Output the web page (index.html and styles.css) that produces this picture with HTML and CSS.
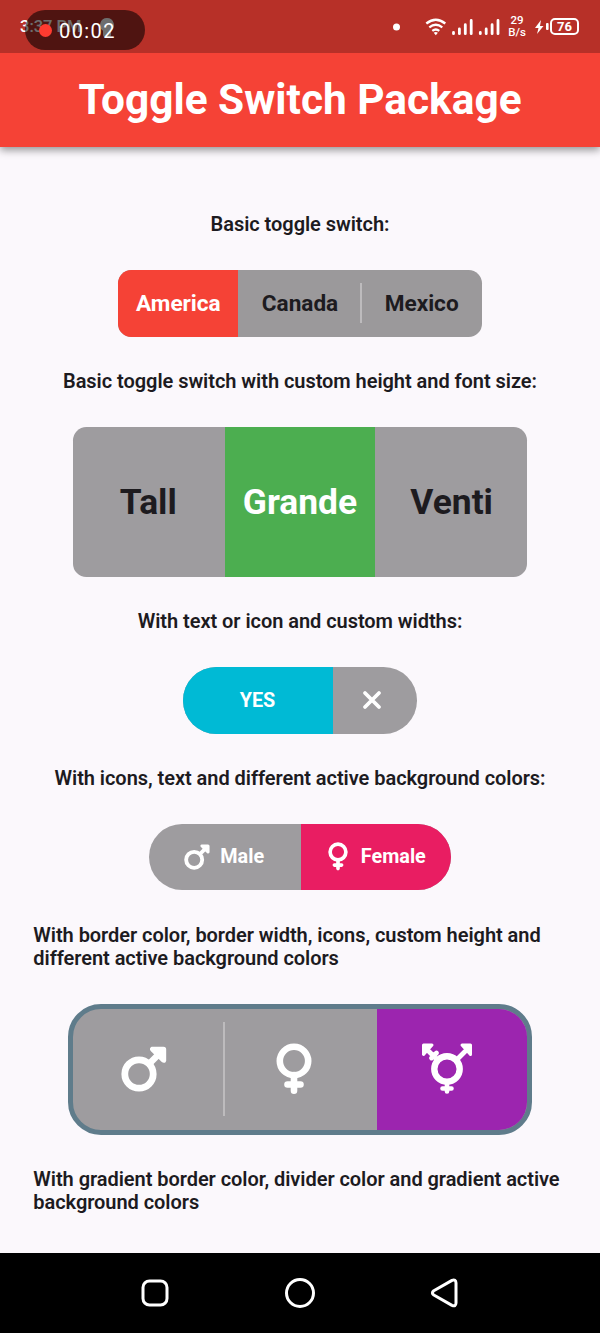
FILE: index.html
```html
<!DOCTYPE html>
<html lang="en">
<head>
<meta charset="utf-8">
<title>Toggle Switch Package</title>
<link rel="stylesheet" href="styles.css">
</head>
<body>
<div class="status">
  <span class="clock">3:37 PM</span>
  <svg class="badge" width="14" height="20" viewBox="0 0 14 20"><path d="M7 0a7 7 0 0 1 4 12.700V17a2 2 0 0 1-2 2H5a2 2 0 0 1-2-2V12.700A7 7 0 0 1 7 0Z" fill="#fff"/></svg>
  <div class="recorder"><i class="rec-dot"></i><span>00:02</span></div>
  <div class="indicators">
    <svg width="110" height="24" viewBox="0 0 110 24" fill="none" stroke="#fff">
      <circle cx="3.500" cy="12" r="3.500" fill="#fff" stroke="none"/>
      <g stroke-width="2.300"><path d="M33.300 8.500Q42.800 .9 52.300 8.500M36.300 12.300Q42.800 7.300 49.300 12.300M39.300 15.800Q42.800 13.200 46.300 15.800"/></g>
      <path d="M40.700 17.700Q42.800 16.200 44.900 17.700L42.800 20.300Z" fill="#fff" stroke="none"/>
      <g stroke-width="2.800" stroke-linecap="round"><path d="M60.500 18.700V17.500M66.400 18.700V14M72.300 18.700V9.700M78.200 18.700V5.500M87.300 18.700V17.500M93.200 18.700V14M99.100 18.700V9.700M105 18.700V5.500"/></g>
    </svg>
    <div class="rate"><span>29</span><span>B/s</span></div>
    <svg class="bolt" width="15" height="16" viewBox="0 0 15 16"><path d="M6 1 0 9H3.500L2 15 8.500 7H5Z" fill="#fff"/><rect x="11" y="4" width="2.600" height="7" rx="1" fill="#fff"/></svg>
    <span class="battery">76</span>
  </div>
</div>
<header class="appbar"><h1>Toggle Switch Package</h1></header>
<main class="content">
  <p>Basic toggle switch:</p>
  <div class="switch basic">
    <div class="cell red">America</div><i class="sep"></i>
    <div class="cell">Canada</div><i class="sep line"></i>
    <div class="cell">Mexico</div>
  </div>
  <p>Basic toggle switch with custom height and font size:</p>
  <div class="switch tall">
    <div class="cell">Tall</div><i class="sep"></i>
    <div class="cell green">Grande</div><i class="sep"></i>
    <div class="cell">Venti</div>
  </div>
  <p>With text or icon and custom widths:</p>
  <div class="switch pill">
    <div class="cell cyan">YES</div><i class="sep"></i>
    <div class="cell narrow"><svg width="20" height="20" viewBox="0 0 20 20"><path d="M3 3 17 17M17 3 3 17" stroke="#fff" stroke-width="3.800" stroke-linecap="round"/></svg></div>
  </div>
  <p>With icons, text and different active background colors:</p>
  <div class="switch pill">
    <div class="cell male"><svg width="26" height="26" viewBox="0 0 46 46"><use href="#mars"/></svg><span>Male</span></div><i class="sep"></i>
    <div class="cell pink female"><svg width="20" height="29" viewBox="0 0 36 52"><use href="#venus"/></svg><span>Female</span></div>
  </div>
  <p>With border color, border width, icons, custom height and different active background colors</p>
  <div class="switch bordered">
    <div class="cell"><svg width="46" height="46" viewBox="0 0 46 46">
      <g id="mars"><circle cx="18" cy="28" r="14.200" fill="none" stroke="#fff" stroke-width="6.800"/><path d="M28 18 37 9" stroke="#fff" stroke-width="6.500"/><path d="M31.500 .7H42.500Q45.200 .7 45.200 3.400V14.300C45.200 17 42.500 17.700 40.500 15.800L30 5.300C28 3.300 29 .7 31.500 .7Z" fill="#fff"/></g></svg></div><i class="sep line"></i>
    <div class="cell"><svg width="36" height="52" viewBox="0 0 36 52">
      <g id="venus" fill="none" stroke="#fff" stroke-width="6.600"><circle cx="18" cy="18" r="14.200"/><path d="M18 32V47.800M11.500 41.500H24.500" stroke-linecap="round"/></g></svg></div><i class="sep"></i>
    <div class="cell purple"><svg width="52" height="52" viewBox="0 0 52 52" fill="none" stroke="#fff">
      <circle cx="26" cy="26" r="12.700" stroke-width="6.400"/>
      <path d="M26 39V48.500M21.500 45.500H30.500" stroke-width="4.600" stroke-linecap="round"/>
      <path d="M36 16 44 8M16 16 8 8M10.500 14.500 15.500 9.500" stroke-width="4.800" stroke-linecap="round" transform="translate(0 .5)"/>
      <path d="M41 2H49.500V11.500ZM2.500 11.500V2H11Z" fill="#fff" stroke-width="3" stroke-linejoin="round"/></svg></div>
  </div>
  <p>With gradient border color, divider color and gradient active background colors</p>
</main>
<nav class="navbar">
  <svg width="32" height="32" viewBox="0 0 32 32"><rect x="4" y="4" width="24" height="24" rx="6.500"/></svg>
  <svg width="32" height="32" viewBox="0 0 32 32"><circle cx="16" cy="16" r="13.500"/></svg>
  <svg width="32" height="32" viewBox="0 0 32 32"><path d="M4.800 13.800 23 3.400Q26.800 2 27 6V26Q26.800 30 23 28.400L4.800 18Q2 16 4.800 13.800Z"/></svg>
</nav>
</body>
</html>
```
FILE: styles.css
```css
* { box-sizing: border-box; }
body {
  margin: 0; width: 600px; height: 1333px; overflow: hidden;
  display: flex; flex-direction: column;
  background: #fbf8fc; color: #1d1b1f;
  font-family: Roboto, sans-serif;
}
svg { display: block; flex: none; }
.status {
  position: relative; flex: none; height: 53px; padding: 0 20px;
  display: flex; align-items: center;
  background: #b73028; color: #fff;
}
.clock { font-size: 16.500px; font-weight: 500; width: 80px; white-space: nowrap; }
.badge { margin-top: 2px; }
.recorder {
  position: absolute; left: 25px; top: 10px; width: 120px; height: 40px;
  border-radius: 20px; background: rgba(0, 0, 0, .57);
  display: flex; align-items: center; gap: 7px; padding: 1px 0 0 14px;
  font-size: 20px; letter-spacing: 1.400px;
}
.rec-dot { width: 13px; height: 13px; border-radius: 50%; background: #ff3b30; }
.indicators { margin-left: auto; display: flex; align-items: center; }
.rate {
  width: 20px; margin-left: 4px; display: flex; flex-direction: column;
  align-items: center; font-size: 11.500px; line-height: 11.500px; font-weight: 500;
}
.bolt { margin-left: 8px; }
.battery {
  width: 29px; height: 17px; margin-right: 1px; border: 2px solid #fff; border-radius: 5px;
  font-size: 13px; line-height: 13px; font-weight: 700; text-align: center;
}
.appbar {
  flex: none; height: 94px; display: flex; align-items: center; justify-content: center;
  background: #f54236; color: #fff; box-shadow: 0 3px 8px rgba(0, 0, 0, .42);
}
h1 { margin: 0; font-size: 42.400px; font-weight: 700; line-height: 50px; }
.content {
  flex: 1; min-height: 0; padding: 66.400px 33.300px 0;
  display: flex; flex-direction: column; align-items: center; gap: 33.330px;
}
p { margin: 0; flex: none; font-size: 20px; line-height: 23.400px; font-weight: 600; letter-spacing: -.05px; }
.switch {
  flex: none; display: flex; overflow: hidden; height: 66.670px;
  background: #9e9c9f; border-radius: 13.330px;
}
.cell {
  width: 150px; display: flex; align-items: center; justify-content: center;
  font-size: 20px; font-weight: 700;
}
.sep { width: 1.670px; flex: none; }
.line { height: 60%; align-self: center; background: #bdbbbd; }
.basic { background: #9b999b; }
.basic .cell { width: 120px; font-size: 22.600px; }
.tall { height: 150px; }
.tall .cell { font-size: 35.400px; }
.pill { border-radius: 33.330px; }
.pill .cell { color: #fff; font-size: 19.800px; }
.pill .narrow { width: 83.330px; padding-right: 8px; }
.red { background: #f54236; color: #fff; }
.green { background: #4cae50; color: #fff; }
.cyan { background: #00bad5; }
.pink { background: #e91d62; }
.purple { background: #9c25af; }
.male { gap: 10px; }
.pill .female { gap: 13px; padding-left: 2px; }
.bordered { height: 131px; border: 5px solid #5f7c8b; border-radius: 33px; }
.bordered .cell { padding-right: 9px; }
.bordered .cell:nth-child(3) { padding-right: 13px; }
.bordered .line { height: 94px; }
.navbar {
  position: relative; flex: none; height: 80px; background: #000;
  display: flex; align-items: center; justify-content: center; gap: 113px;
}
.navbar svg { fill: none; stroke: #fff; stroke-width: 3; stroke-linejoin: round; }
```
